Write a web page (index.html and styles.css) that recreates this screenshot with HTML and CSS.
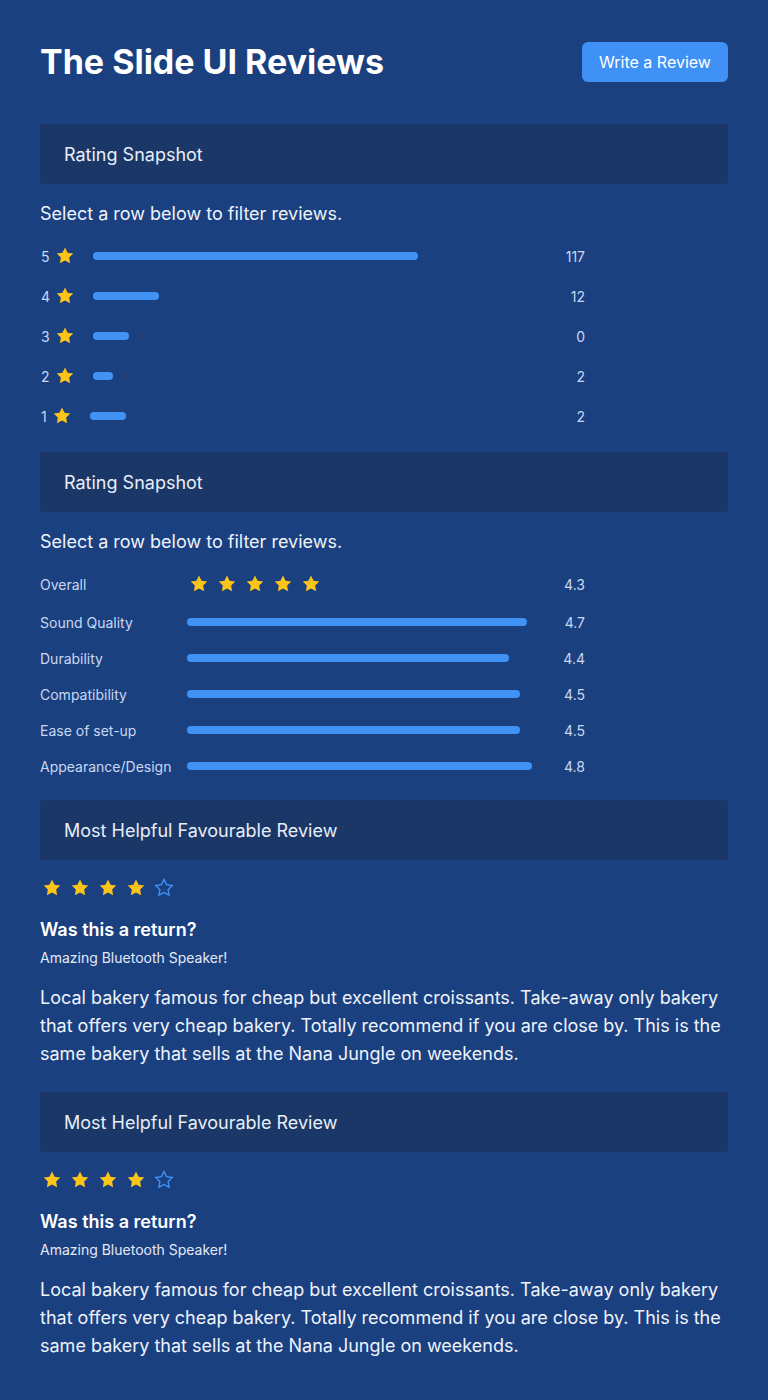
FILE: index.html
```html
<!DOCTYPE html>
<html lang="en">
<head>
<meta charset="utf-8">
<title>The Slide UI Reviews</title>
<link rel="stylesheet" href="styles.css">
</head>
<body>
<svg width="0" height="0" class="defs" aria-hidden="true">
  <defs>
    <path id="star" d="M12 2.6l2.8 5.7 6.3.9-4.55 4.45 1.07 6.27L12 16.950l-5.62 2.97 1.07-6.27L2.9 9.2l6.3-.9z"/>
  </defs>
</svg>
<main class="page">
  <header class="top">
    <h1 class="title">The Slide UI Reviews</h1>
    <button class="btn">Write a Review</button>
  </header>

  <section class="section">
    <div class="card-head">Rating Snapshot</div>
    <p class="hint">Select a row below to filter reviews.</p>
    <div class="dist">
      <div class="drow"><span class="num">5</span><svg class="star-s" viewBox="1 1 22 22"><use href="#star"/></svg><span class="bar" style="width:325px"></span><span class="count">117</span></div>
      <div class="drow"><span class="num">4</span><svg class="star-s" viewBox="1 1 22 22"><use href="#star"/></svg><span class="bar" style="width:66px"></span><span class="count">12</span></div>
      <div class="drow"><span class="num">3</span><svg class="star-s" viewBox="1 1 22 22"><use href="#star"/></svg><span class="bar" style="width:36px"></span><span class="count">0</span></div>
      <div class="drow"><span class="num">2</span><svg class="star-s" viewBox="1 1 22 22"><use href="#star"/></svg><span class="bar" style="width:20px"></span><span class="count">2</span></div>
      <div class="drow"><span class="num">1</span><svg class="star-s" viewBox="1 1 22 22"><use href="#star"/></svg><span class="bar" style="width:36px"></span><span class="count">2</span></div>
    </div>
  </section>

  <section class="section">
    <div class="card-head">Rating Snapshot</div>
    <p class="hint">Select a row below to filter reviews.</p>
    <div class="attrs">
      <div class="arow arow-first"><span class="alabel">Overall</span>
        <span class="stars">
          <svg class="star-m" viewBox="1 1 22 22"><use href="#star"/></svg>
          <svg class="star-m" viewBox="1 1 22 22"><use href="#star"/></svg>
          <svg class="star-m" viewBox="1 1 22 22"><use href="#star"/></svg>
          <svg class="star-m" viewBox="1 1 22 22"><use href="#star"/></svg>
          <svg class="star-m" viewBox="1 1 22 22"><use href="#star"/></svg>
        </span>
        <span class="val">4.3</span></div>
      <div class="arow"><span class="alabel">Sound Quality</span><span class="bar" style="width:340px"></span><span class="val">4.7</span></div>
      <div class="arow"><span class="alabel">Durability</span><span class="bar" style="width:322px"></span><span class="val">4.4</span></div>
      <div class="arow"><span class="alabel">Compatibility</span><span class="bar" style="width:333px"></span><span class="val">4.5</span></div>
      <div class="arow"><span class="alabel">Ease of set-up</span><span class="bar" style="width:333px"></span><span class="val">4.5</span></div>
      <div class="arow"><span class="alabel">Appearance/Design</span><span class="bar" style="width:345px"></span><span class="val">4.8</span></div>
    </div>
  </section>

  <section class="section review">
    <div class="card-head">Most Helpful Favourable Review</div>
    <div class="stars rstars">
      <svg class="star-m" viewBox="1 1 22 22"><use href="#star"/></svg>
      <svg class="star-m" viewBox="1 1 22 22"><use href="#star"/></svg>
      <svg class="star-m" viewBox="1 1 22 22"><use href="#star"/></svg>
      <svg class="star-m" viewBox="1 1 22 22"><use href="#star"/></svg>
      <svg class="star-m star-empty" viewBox="1 1 22 22"><use href="#star"/></svg>
    </div>
    <h2 class="rtitle">Was this a return?</h2>
    <p class="rsub">Amazing Bluetooth Speaker!</p>
    <p class="rbody">Local bakery famous for cheap but excellent croissants. Take-away only bakery that offers very cheap bakery. Totally recommend if you are close by. This is the same bakery that sells at the Nana Jungle on weekends.</p>
  </section>

  <section class="section review">
    <div class="card-head">Most Helpful Favourable Review</div>
    <div class="stars rstars">
      <svg class="star-m" viewBox="1 1 22 22"><use href="#star"/></svg>
      <svg class="star-m" viewBox="1 1 22 22"><use href="#star"/></svg>
      <svg class="star-m" viewBox="1 1 22 22"><use href="#star"/></svg>
      <svg class="star-m" viewBox="1 1 22 22"><use href="#star"/></svg>
      <svg class="star-m star-empty" viewBox="1 1 22 22"><use href="#star"/></svg>
    </div>
    <h2 class="rtitle">Was this a return?</h2>
    <p class="rsub">Amazing Bluetooth Speaker!</p>
    <p class="rbody">Local bakery famous for cheap but excellent croissants. Take-away only bakery that offers very cheap bakery. Totally recommend if you are close by. This is the same bakery that sells at the Nana Jungle on weekends.</p>
  </section>
</main>
</body>
</html>
```
FILE: styles.css
```css
* { box-sizing: border-box; }
html, body { margin: 0; padding: 0; }
body {
  background: #1b4080;
  color: #ffffff;
  font-family: Inter, "Noto Sans", sans-serif;
  min-height: 1400px;
}
.defs { position: absolute; width: 0; height: 0; overflow: hidden; }
.page { padding: 42px 40px 40px; }

.top {
  display: flex;
  align-items: center;
  justify-content: space-between;
  height: 40px;
}
.title {
  margin: 0;
  font-size: 34px;
  font-weight: 700;
  line-height: 40px;
  color: #ffffff;
}
.btn {
  font-family: inherit;
  font-size: 16px;
  color: #ffffff;
  background: #4091f5;
  border: 0;
  border-radius: 6px;
  width: 146px;
  height: 40px;
  padding: 0;
  cursor: pointer;
}

.section { margin-top: 42px; }
.section + .section { margin-top: 16px; }
.review + .review { margin-top: 24px; }

.card-head {
  height: 60px;
  display: flex;
  align-items: center;
  padding: 0 24px;
  background: #1a3767;
  border-radius: 4px;
  font-size: 18px;
  color: #e8eef8;
}
.hint {
  margin: 18px 0 0;
  font-size: 18px;
  line-height: 24px;
  color: #eef3fb;
}

.dist { margin-top: 10px; width: 545px; }
.drow {
  display: flex;
  align-items: center;
  height: 40px;
  font-size: 14px;
  color: #c9d8f2;
}
.num { margin-left: 1px; }
.star-s { width: 20px; height: 20px; margin-left: 5px; fill: #fcc419; }
.bar {
  display: block;
  height: 8px;
  border-radius: 4px;
  background: #4093f5;
}
.drow .bar { margin-left: 18px; }
.count { margin-left: auto; }

.attrs { margin-top: 10px; width: 545px; }
.arow {
  display: flex;
  align-items: center;
  height: 36px;
  font-size: 14px;
  color: #c9d8f2;
}
.arow-first { height: 40px; }
.alabel { width: 147px; flex: none; }
.val { margin-left: auto; }

.stars { display: flex; gap: 8px; }
.star-m { width: 20px; height: 20px; fill: #fcc419; }
.arow .stars { margin-left: 2px; }
.star-empty { fill: none; stroke: #4093f5; stroke-width: 1.5; }

.rstars { margin-top: 18px; margin-left: 2px; }
.rtitle {
  margin: 20px 0 0;
  font-size: 18px;
  font-weight: 600;
  line-height: 24px;
  color: #ffffff;
}
.rsub {
  margin: 6px 0 0;
  font-size: 14px;
  line-height: 20px;
  color: #e2eaf7;
}
.rbody {
  margin: 16px 0 0;
  font-size: 18px;
  line-height: 28px;
  color: #eef3fb;
}
```
